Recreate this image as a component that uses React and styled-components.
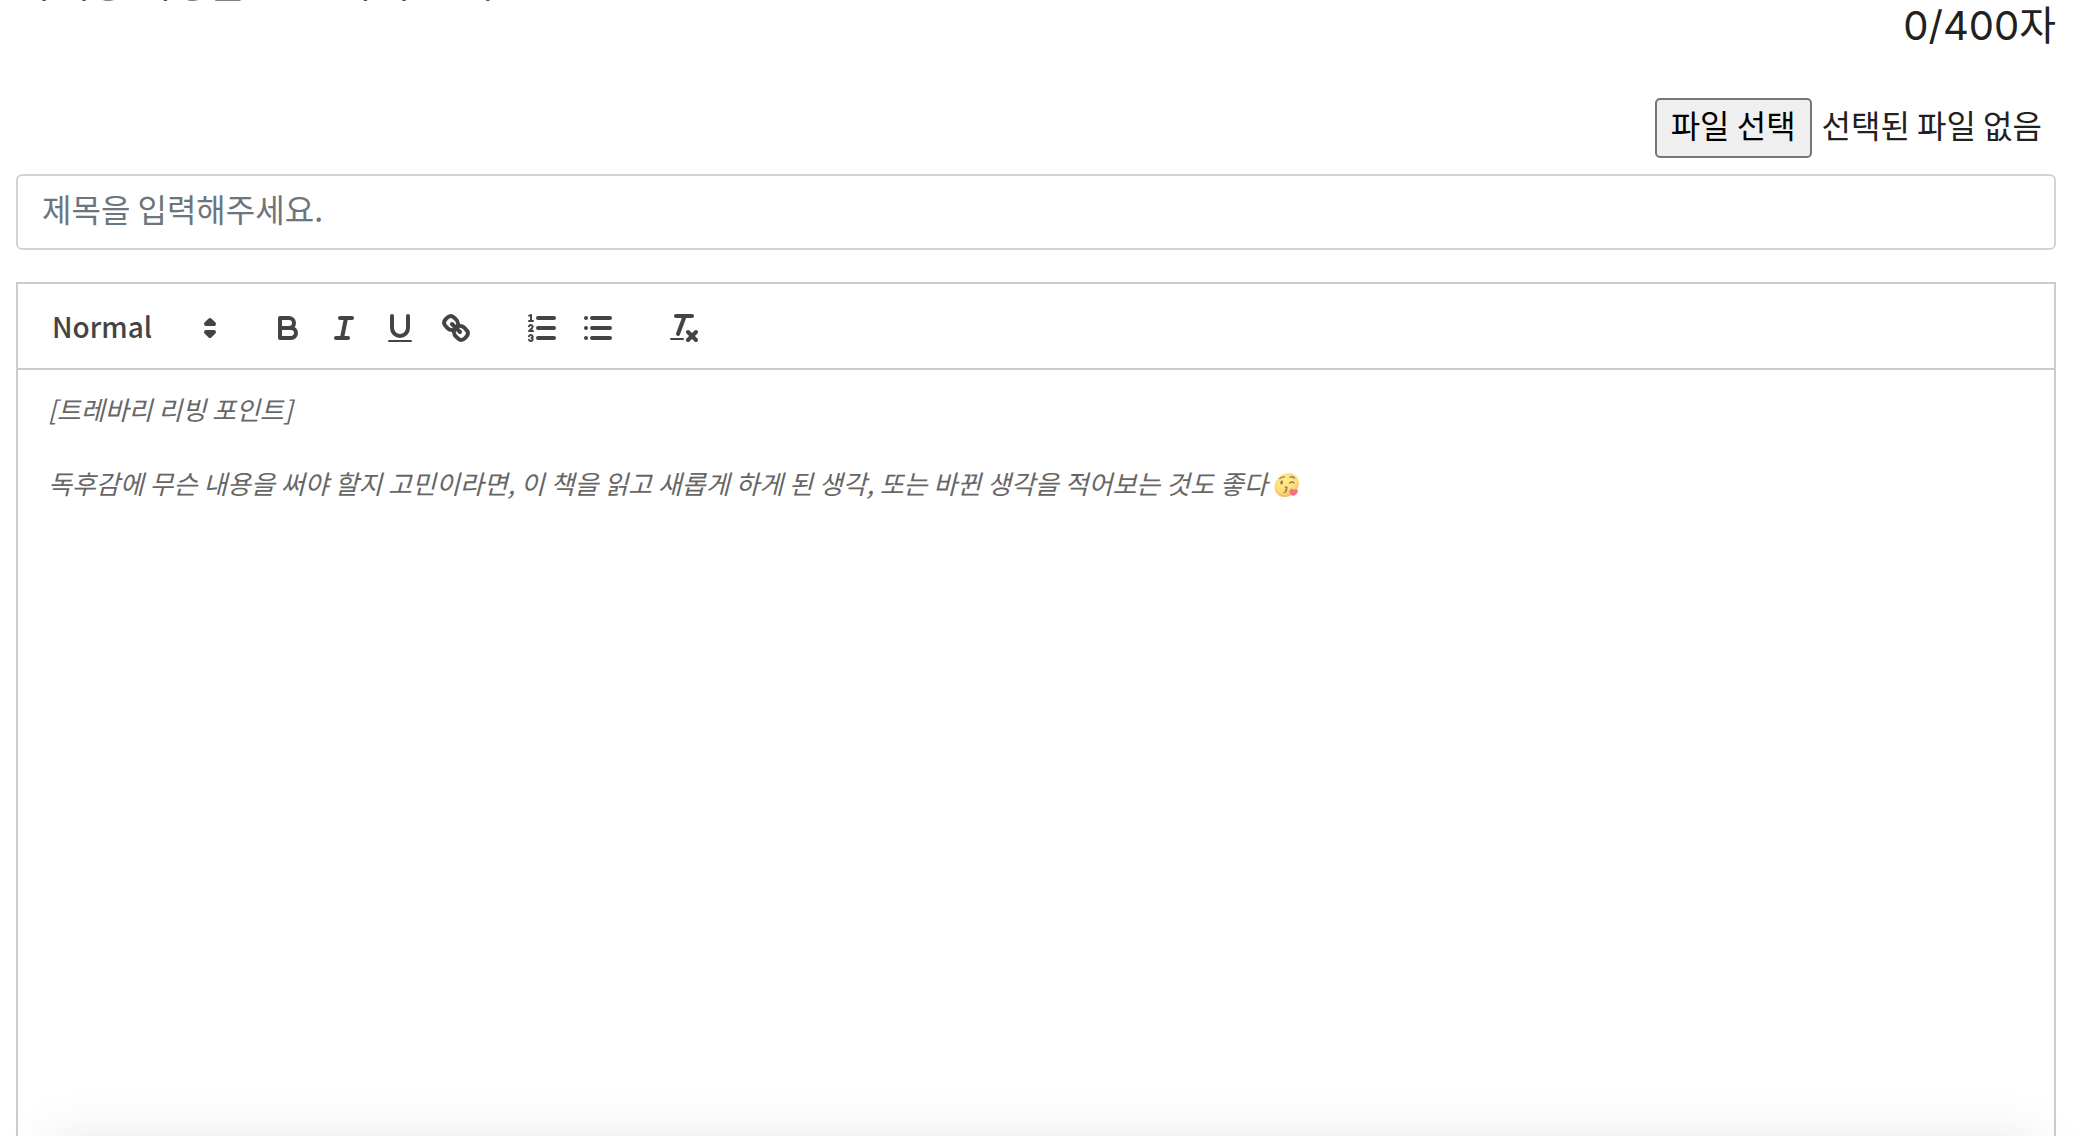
import { useRef, useState } from "react"
import styled, { createGlobalStyle } from "styled-components"

const GlobalStyle = createGlobalStyle`
    * {
        box-sizing: border-box;
    }

    body {
        margin: 0;
        background: #fff;
        color: #212121;
        font-family: "Noto Sans CJK KR", sans-serif;
        font-size: 32px;
        line-height: 48px;
        overflow: hidden;
    }

    button, input, textarea, select {
        font: inherit;
    }
`;

const Page = styled.main`
    display: flex;
    flex-direction: column;
    height: 100vh;
    padding: 0 32px 0 16px;
    overflow: hidden;
`;

const Guide = styled.p`
    flex: none;
    height: 48px;
    margin: -48px 0 0;
    font-size: 40px;
    line-height: 56px;
`;

const Counter = styled.p`
    flex: none;
    margin: 0;
    padding-top: 2px;
    font-family: Inter, "Noto Sans CJK KR", sans-serif;
    font-size: 40px;
    line-height: 48px;
    text-align: right;
`;

const FileRow = styled.div`
    display: flex;
    flex: none;
    justify-content: flex-end;
    gap: 10px;
    margin-top: 48px;
    padding-right: 14px;
`;

const FileButton = styled.button`
    height: 60px;
    padding: 0 14px 8px;
    border: 2px solid #767676;
    border-radius: 5px;
    background: #efefef;
    color: #000;
    line-height: 48px;
`;

const FileName = styled.span`
    line-height: 52px;
`;

const TitleInput = styled.input`
    flex: none;
    width: 100%;
    height: 76px;
    margin-top: 16px;
    padding: 0 24px 8px;
    border: 2px solid #ced4da;
    border-radius: 6px;
    background: #fff;
    color: #495057;

    &::placeholder {
        color: #6c757d;
        opacity: 1;
    }
`;

const Editor = styled.section`
    display: flex;
    flex: 1;
    flex-direction: column;
    margin-top: 32px;
    border: 2px solid #ccc;
    border-bottom: 0;
`;

const Toolbar = styled.div`
    display: flex;
    gap: 30px;
    padding: 20px 16px 16px;
    border-bottom: 2px solid #ccc;
`;

const ToolGroup = styled.div`
    display: flex;
`;

const FormatPicker = styled.label`
    display: grid;
    grid-template-columns: 1fr 38px;
    align-items: center;
    width: 196px;
    height: 48px;
    color: #444;

    select {
        grid-area: 1 / 1 / 2 / 3;
        width: 100%;
        height: 48px;
        padding: 0 0 4px 18px;
        border: 0;
        appearance: none;
        background: transparent;
        color: #444;
        font-size: 28px;
        font-weight: 500;
        line-height: 44px;
    }

    svg {
        grid-area: 1 / 2 / 2 / 3;
        pointer-events: none;
    }
`;

const ToolButton = styled.button`
    display: flex;
    align-items: center;
    justify-content: center;
    width: 56px;
    height: 48px;
    padding: 0;
    border: 0;
    background: none;
    color: #444;
`;

const Icon = styled.svg`
    display: block;
    width: 36px;
    height: 36px;
    fill: none;
    stroke: currentColor;
    stroke-width: 2;
    stroke-linecap: round;
    stroke-linejoin: round;

    .fill {
        fill: currentColor;
        stroke: none;
    }

    .thin {
        stroke-width: 1;
    }

    .filled {
        fill: currentColor;
    }
`;

const EditorBody = styled.div`
    position: relative;
    display: flex;
    flex: 1;
    font-size: 26px;
    line-height: 37px;
`;

const EditorText = styled.textarea`
    flex: 1;
    padding: 20px 30px;
    border: 0;
    outline: 0;
    resize: none;
    background: transparent;
    color: #212121;
`;

const EditorHint = styled.div`
    position: absolute;
    top: 20px;
    right: 30px;
    left: 30px;
    color: #666;
    font-style: italic;
    pointer-events: none;

    p {
        margin: 0 0 37px;
    }
`;

const Emoji = styled.svg`
    width: 28px;
    height: 26px;
    vertical-align: -4px;
    opacity: 0.7;
`;

// soft shadow of the bar that waits under the bottom edge
const BottomShade = styled.div`
    position: fixed;
    right: 48px;
    bottom: -84px;
    left: 48px;
    height: 80px;
    box-shadow: 0 0 56px rgba(0, 0, 0, 0.1);
    pointer-events: none;
`;

const icons = {
    bold: (
        <>
            <path d="M5,4H9.5A2.5,2.5,0,0,1,12,6.5v0A2.5,2.5,0,0,1,9.5,9H5A0,0,0,0,1,5,9V4A0,0,0,0,1,5,4Z" />
            <path d="M5,9h5.5A2.5,2.5,0,0,1,13,11.5v0A2.5,2.5,0,0,1,10.5,14H5a0,0,0,0,1,0,0V9A0,0,0,0,1,5,9Z" />
        </>
    ),
    italic: (
        <>
            <line x1="7" x2="13" y1="4" y2="4" />
            <line x1="5" x2="11" y1="14" y2="14" />
            <line x1="8" x2="10" y1="14" y2="4" />
        </>
    ),
    underline: (
        <>
            <path d="M5,3V9a4.012,4.012,0,0,0,4,4H9a4.012,4.012,0,0,0,4-4V3" />
            <rect className="fill" height="1" rx="0.5" ry="0.5" width="12" x="3" y="15" />
        </>
    ),
    link: (
        <>
            <line x1="7" x2="11" y1="7" y2="11" />
            <path d="M8.9,4.577a3.476,3.476,0,0,1,.36,4.679A3.476,3.476,0,0,1,4.577,8.9C3.185,7.5,2.035,6.4,4.217,4.217S7.5,3.185,8.9,4.577Z" />
            <path d="M13.423,9.1a3.476,3.476,0,0,0-4.679-.36,3.476,3.476,0,0,0,.36,4.679c1.392,1.392,2.5,2.542,4.679.36S14.815,10.5,13.423,9.1Z" />
        </>
    ),
    ordered: (
        <>
            <line x1="7" x2="15" y1="4" y2="4" />
            <line x1="7" x2="15" y1="9" y2="9" />
            <line x1="7" x2="15" y1="14" y2="14" />
            <line className="thin" x1="2.5" x2="4.5" y1="5.5" y2="5.5" />
            <path className="fill" d="M3.5,6A0.5,0.5,0,0,1,3,5.5V3.085l-0.276.138A0.5,0.5,0,0,1,2.053,3c-0.124-.247-0.023-0.324.224-0.447l1-.5A0.5,0.5,0,0,1,4,2.5v3A0.5,0.5,0,0,1,3.5,6Z" />
            <path className="thin" d="M4.5,10.5h-2c0-.234,1.85-1.076,1.85-2.234A0.959,0.959,0,0,0,2.5,8.156" />
            <path className="thin" d="M2.5,14.846a0.959,0.959,0,0,0,1.85-.109A0.7,0.7,0,0,0,3.75,14a0.688,0.688,0,0,0,.6-0.736,0.959,0.959,0,0,0-1.85-.109" />
        </>
    ),
    bullet: (
        <>
            <line x1="6" x2="15" y1="4" y2="4" />
            <line x1="6" x2="15" y1="9" y2="9" />
            <line x1="6" x2="15" y1="14" y2="14" />
            <line x1="3" x2="3" y1="4" y2="4" />
            <line x1="3" x2="3" y1="9" y2="9" />
            <line x1="3" x2="3" y1="14" y2="14" />
        </>
    ),
    clean: (
        <>
            <line x1="5" x2="13" y1="3" y2="3" />
            <line x1="6" x2="9.35" y1="12" y2="3" />
            <line x1="11" x2="15" y1="11" y2="15" />
            <line x1="15" x2="11" y1="11" y2="15" />
            <rect className="fill" height="1" rx="0.5" ry="0.5" width="7" x="2" y="14" />
        </>
    ),
}

const toolGroups = [
    [['bold', '굵게'], ['italic', '기울임'], ['underline', '밑줄'], ['link', '링크']],
    [['ordered', '번호 목록'], ['bullet', '글머리 목록']],
    [['clean', '서식 지우기']],
]

const KissEmoji = () => (
    <Emoji viewBox="0 0 28 26" role="img" aria-label="😘">
        <defs>
            <radialGradient id="face" cx="0.45" cy="0.35" r="0.65">
                <stop offset="0" stopColor="#ffe95c" />
                <stop offset="0.7" stopColor="#fdce3f" />
                <stop offset="1" stopColor="#ee9a22" />
            </radialGradient>
        </defs>
        <g transform="skewX(-10) translate(2 0)">
            <circle cx="14" cy="13" r="12" fill="url(#face)" />
            <g fill="none" stroke="#6f4312" strokeWidth="1.4" strokeLinecap="round">
                <path d="M6 6.5q2-2 4-1.5M16 5q2.5-1 4.5 1" />
                <path d="M16.5 11q2-2 4.5 0" />
                <path d="M13 15q3 .3 1.5 2q-1 .6-1.5.6q3 .4 1.3 2.2q-.8.6-1.500.5" />
            </g>
            <ellipse cx="8.5" cy="10.5" rx="1.4" ry="2" fill="#6f4312" />
            <path d="M22.5 24c-3.5-1.5-5.5-4-4.5-6s3.5-1.5 4 .2c1.5-1.7 4-1 4.3 1c.2 2-1.5 3.8-3.8 4.8Z" fill="#f2364f" />
        </g>
    </Emoji>
)

const FilePicker = () => {
    const inputRef = useRef(null)
    const [fileName, setFileName] = useState('선택된 파일 없음')

    return (
        <FileRow>
            <FileButton type="button" onClick={() => inputRef.current.click()}>파일 선택</FileButton>
            <FileName>{fileName}</FileName>
            <input
                ref={inputRef}
                type="file"
                hidden
                onChange={e => e.target.files[0] && setFileName(e.target.files[0].name)}
            />
        </FileRow>
    )
}

const App = () => {
    const [text, setText] = useState('')

    return (
        <>
            <GlobalStyle />
            <Page>
                <Guide>과제용 서평을 쓰는 자리 안내문</Guide>
                <Counter>{text.length}/400자</Counter>
                <FilePicker />
                <TitleInput type="text" aria-label="제목" placeholder="제목을 입력해주세요." />
                <Editor>
                    <Toolbar>
                        <FormatPicker>
                            <select aria-label="문단 형식" defaultValue="Normal">
                                <option>Normal</option>
                                <option>Heading 1</option>
                                <option>Heading 2</option>
                            </select>
                            <Icon viewBox="0 0 18 18">
                                <polygon className="filled" points="7 11 9 13 11 11 7 11" />
                                <polygon className="filled" points="7 7 9 5 11 7 7 7" />
                            </Icon>
                        </FormatPicker>
                        {toolGroups.map((tools, i) => (
                            <ToolGroup key={i}>
                                {tools.map(([name, label]) => (
                                    <ToolButton key={name} type="button" aria-label={label}>
                                        <Icon viewBox="0 0 18 18">{icons[name]}</Icon>
                                    </ToolButton>
                                ))}
                            </ToolGroup>
                        ))}
                    </Toolbar>
                    <EditorBody>
                        <EditorText aria-label="독후감" value={text} onChange={e => setText(e.target.value)} />
                        {!text && (
                            <EditorHint>
                                <p>[트레바리 리빙 포인트]</p>
                                <p>
                                    독후감에 무슨 내용을 써야 할지 고민이라면, 이 책을 읽고 새롭게 하게 된 생각, 또는 바뀐 생각을 적어보는 것도 좋다 <KissEmoji />
                                </p>
                            </EditorHint>
                        )}
                    </EditorBody>
                </Editor>
            </Page>
            <BottomShade />
        </>
    )
}

export default App
